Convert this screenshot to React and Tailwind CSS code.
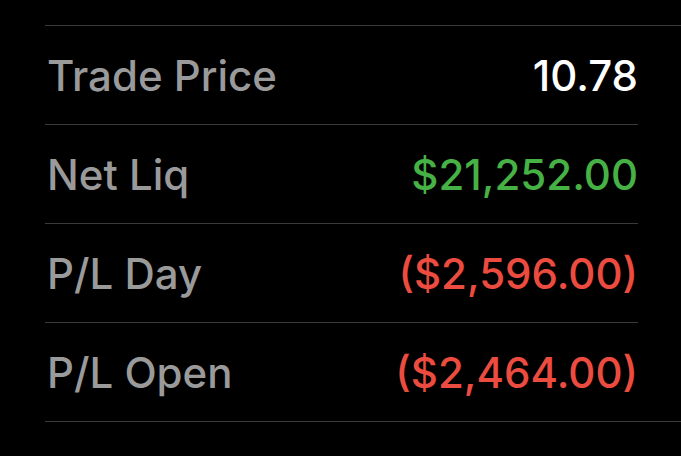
const rows = [
  { label: 'Trade Price', value: '10.78', color: 'text-white' },
  { label: 'Net Liq', value: '$21,252.00', color: 'text-[#46b145]' },
  { label: 'P/L Day', value: '($2,596.00)', color: 'text-[#eb4c3f]' },
  { label: 'P/L Open', value: '($2,464.00)', color: 'text-[#eb4c3f]' },
];

export default function App() {
  return (
    <div className="w-[681px] h-[456px] bg-black overflow-hidden font-['Inter',sans-serif] font-medium">
      <div className="pt-[25px] pl-[45px]">
        <div className="h-px bg-[#3a3a3c]" />
        {rows.map((row, i) => (
          <div key={row.label}>
            <div className="h-[98px] flex items-center justify-between pl-[2px] pr-[43px] text-[42px]">
              <span className="text-[#9a9a9a]">{row.label}</span>
              <span className={row.color}>{row.value}</span>
            </div>
            <div className={i === rows.length - 1 ? 'h-px bg-[#3a3a3c]' : 'h-px bg-[#3a3a3c] mr-[43px]'} />
          </div>
        ))}
      </div>
    </div>
  );
}
